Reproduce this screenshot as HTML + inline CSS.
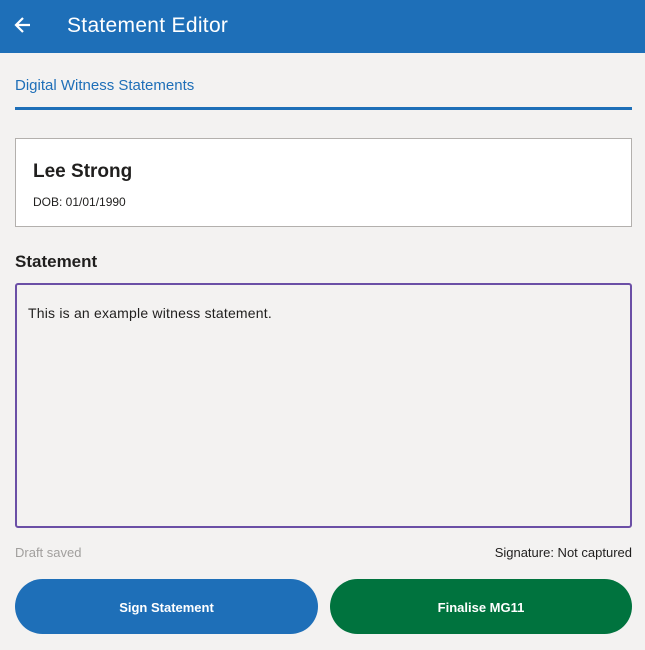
<!DOCTYPE html>
<html><head><style>
*{box-sizing:border-box;margin:0;padding:0}
body{width:645px;height:650px;background:#f3f2f1;font-family:"Liberation Sans",sans-serif;position:relative;overflow:hidden;color:#201f1e}
.hdr{position:absolute;left:0;top:0;width:645px;height:53px;background:#1e6fb8}
.hdr .t{position:absolute;left:67px;top:14px;color:#fff;font-size:21px;letter-spacing:0.3px}
.tab{position:absolute;left:15px;top:77px;color:#1e6fb8;font-size:15px}
.line{position:absolute;left:15px;top:107px;width:617px;height:3px;background:#1e6fb8}
.card{position:absolute;left:15px;top:138px;width:617px;height:89px;background:#fff;border:1px solid #b3b0ad}
.card .n{position:absolute;left:17px;top:22px;font-size:19px;font-weight:bold}
.card .d{position:absolute;left:17px;top:56px;font-size:12px}
.lbl{position:absolute;left:15px;top:252px;font-size:17px;font-weight:bold}
.ta{position:absolute;left:15px;top:283px;width:617px;height:245px;background:#f3f2f1;border:2px solid #6b4fa6;border-radius:3px}
.ta span{position:absolute;left:11px;top:20px;font-size:14px;letter-spacing:0.2px}
.ds{position:absolute;left:15px;top:545px;font-size:13px;color:#a19f9d}
.sg{position:absolute;right:13px;top:545px;font-size:13px}
.b{position:absolute;top:579px;width:303px;height:55px;border-radius:28px;color:#fff;font-weight:bold;font-size:13px;text-align:center;line-height:58px}
</style></head><body>
<div class="hdr">
<svg style="position:absolute;left:13px;top:15px" width="20" height="20" viewBox="0 0 20 20"><path d="M17 10H3M10 3L3 10L10 17" stroke="#fff" stroke-width="2.2" fill="none"/></svg>
<div class="t">Statement Editor</div></div>
<div class="tab">Digital Witness Statements</div>
<div class="line"></div>
<div class="card"><div class="n">Lee Strong</div><div class="d">DOB: 01/01/1990</div></div>
<div class="lbl">Statement</div>
<div class="ta"><span>This is an example witness statement.</span></div>
<div class="ds">Draft saved</div>
<div class="sg">Signature: Not captured</div>
<div class="b" style="left:15px;background:#1e6fb8">Sign Statement</div>
<div class="b" style="left:330px;width:302px;background:#00733e">Finalise MG11</div>
</body></html>
